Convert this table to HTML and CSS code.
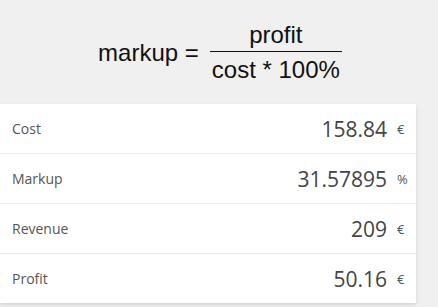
FILE: index.html
```html
<!DOCTYPE html>
<html>
<head>
<meta charset="utf-8">
<link rel="stylesheet" href="styles.css">
</head>
<body>
<div class="header">
  <div class="formula">
    <span class="lhs">markup =</span>
    <span class="frac">
      <span class="num">profit</span>
      <span class="den">cost * 100%</span>
    </span>
  </div>
</div>
<div class="card">
  <div class="row"><span class="label">Cost</span><span class="value">158.84</span><span class="unit">€</span></div>
  <div class="row"><span class="label">Markup</span><span class="value">31.57895</span><span class="unit">%</span></div>
  <div class="row"><span class="label">Revenue</span><span class="value">209</span><span class="unit">€</span></div>
  <div class="row"><span class="label">Profit</span><span class="value">50.16</span><span class="unit">€</span></div>
</div>
</body>
</html>
```
FILE: styles.css
```css
html, body {
  margin: 0;
  padding: 0;
  background: #f0f0f0;
}
body {
  width: 438px;
  height: 307px;
  overflow: hidden;
}
.header {
  height: 104px;
  display: flex;
  justify-content: center;
  align-items: center;
}
.formula {
  display: flex;
  align-items: center;
  font-family: "Liberation Sans", Arial, sans-serif;
  font-size: 24px;
  color: #111;
  margin-left: 2px;
}
.lhs {
  margin-right: 11px;
  margin-top: 2px;
}
.frac {
  display: flex;
  flex-direction: column;
  align-items: center;
}
.num {
  padding: 0 4px 3px;
  border-bottom: 1.5px solid #111;
  width: 100%;
  text-align: center;
  box-sizing: border-box;
  line-height: 26px;
}
.den {
  line-height: 26px;
  padding: 5px 2px 0;
}
.card {
  width: 416px;
  background: #fff;
  box-shadow: 0 2px 4px rgba(0,0,0,0.12);
}
.row {
  height: 49px;
  display: flex;
  align-items: center;
  border-bottom: 1px solid #ebebeb;
  padding: 0 10px 0 12px;
  font-family: "Open Sans", "Segoe UI", sans-serif;
}
.row:last-child {
  border-bottom: none;
}
.label {
  flex: 1;
  font-size: 14px;
  color: #555;
}
.value {
  font-size: 21px;
  color: #444;
}
.unit {
  font-size: 13px;
  color: #555;
  margin-left: 10px;
  width: 9px;
}
```
